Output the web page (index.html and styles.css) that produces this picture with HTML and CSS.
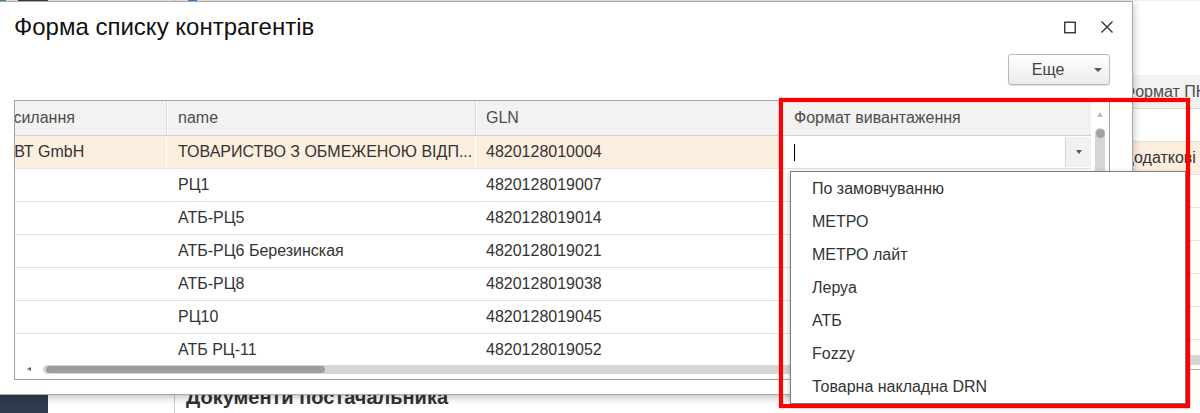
FILE: index.html
```html
<!DOCTYPE html>
<html lang="uk">
<head>
<meta charset="utf-8">
<title>Форма списку контрагентів</title>
<link rel="stylesheet" href="styles.css">
</head>
<body>
<div class="desktop">
  <div class="app">
    <div class="topstrip">
      <span class="ts-green"></span><span class="ts-gap"></span><span class="ts-dark"></span><span class="ts-nav"></span><span class="ts-line"></span><span class="ts-gap2"></span><span class="ts-blue"></span>
    </div>
    <div class="app-body">
      <aside class="sidebar"></aside>
      <nav class="navpanel"></nav>
      <main class="workspace">
        <div class="bg-table">
          <div class="bg-row bg-head"><div class="bg-fill"></div><div class="bg-last">Формат ПН</div></div>
          <div class="bg-rows">
            <div class="bg-row"><div class="bg-fill"></div><div class="bg-last"></div></div>
            <div class="bg-row bg-sel"><div class="bg-fill"></div><div class="bg-last">Додаткові угоди</div></div>
            <div class="bg-row"><div class="bg-fill"></div><div class="bg-last"></div></div>
            <div class="bg-row"><div class="bg-fill"></div><div class="bg-last"></div></div>
            <div class="bg-row"><div class="bg-fill"></div><div class="bg-last"></div></div>
            <div class="bg-row"><div class="bg-fill"></div><div class="bg-last"></div></div>
            <div class="bg-row"><div class="bg-fill"></div><div class="bg-last"></div></div>
            <div class="bg-row"><div class="bg-fill"></div><div class="bg-last"></div></div>
          </div>
          <div class="bg-hscroll"><div class="bg-hs-bar"></div></div>
        </div>
        <h2 class="bg-heading">Документи постачальника</h2>
      </main>
    </div>
  </div>

  <section class="dialog">
    <header class="dlg-head">
      <h1 class="dlg-title">Форма списку контрагентів</h1>
      <div class="win-btns">
        <span class="win-btn" title="Розгорнути">
          <svg width="14" height="14" viewBox="0 0 14 14"><rect x="1.75" y="2.25" width="10.5" height="10.5" fill="none" stroke="#333" stroke-width="1.4"/></svg>
        </span>
        <span class="win-btn" title="Закрити">
          <svg width="14" height="14" viewBox="0 0 14 14"><path d="M1.5 1.5 L12.5 12.5 M12.5 1.5 L1.5 12.5" fill="none" stroke="#333" stroke-width="1.4"/></svg>
        </span>
      </div>
    </header>
    <div class="dlg-toolbar">
      <div class="more-btn"><span class="more-label">Еще</span><span class="more-arrow"><span class="tri-down"></span></span></div>
    </div>
    <div class="grid">
      <div class="grid-main">
        <div class="grid-view">
          <div class="grid-inner">
            <div class="g-row g-head">
              <div class="g-cell c1">Посилання</div>
              <div class="g-cell c2">name</div>
              <div class="g-cell c3">GLN</div>
              <div class="g-cell c4">Формат вивантаження</div>
            </div>
            <div class="g-row g-sel">
              <div class="g-cell c1">АБВТ GmbH</div>
              <div class="g-cell c2">ТОВАРИСТВО З ОБМЕЖЕНОЮ ВІДП...</div>
              <div class="g-cell c3">4820128010004</div>
              <div class="g-cell c4 g-edit"><span class="caret"></span><span class="edit-btn"><span class="tri-down small"></span></span></div>
            </div>
            <div class="g-row">
              <div class="g-cell c1"></div>
              <div class="g-cell c2">РЦ1</div>
              <div class="g-cell c3">4820128019007</div>
              <div class="g-cell c4"></div>
            </div>
            <div class="g-row">
              <div class="g-cell c1"></div>
              <div class="g-cell c2">АТБ-РЦ5</div>
              <div class="g-cell c3">4820128019014</div>
              <div class="g-cell c4"></div>
            </div>
            <div class="g-row">
              <div class="g-cell c1"></div>
              <div class="g-cell c2">АТБ-РЦ6 Березинская</div>
              <div class="g-cell c3">4820128019021</div>
              <div class="g-cell c4"></div>
            </div>
            <div class="g-row">
              <div class="g-cell c1"></div>
              <div class="g-cell c2">АТБ-РЦ8</div>
              <div class="g-cell c3">4820128019038</div>
              <div class="g-cell c4"></div>
            </div>
            <div class="g-row">
              <div class="g-cell c1"></div>
              <div class="g-cell c2">РЦ10</div>
              <div class="g-cell c3">4820128019045</div>
              <div class="g-cell c4"></div>
            </div>
            <div class="g-row">
              <div class="g-cell c1"></div>
              <div class="g-cell c2">АТБ РЦ-11</div>
              <div class="g-cell c3">4820128019052</div>
              <div class="g-cell c4"></div>
            </div>
          </div>
        </div>
        <div class="hscroll">
          <span class="tri-left"></span>
          <div class="hs-track"><div class="hs-thumb"></div></div>
        </div>
      </div>
      <div class="vscroll">
        <span class="tri-up"></span>
        <div class="vs-track"><span class="vs-thumb"></span></div>
      </div>
    </div>
  </section>

  <ul class="dropdown">
    <li>По замовчуванню</li>
    <li>МЕТРО</li>
    <li>МЕТРО лайт</li>
    <li>Леруа</li>
    <li>АТБ</li>
    <li>Fozzy</li>
    <li>Товарна накладна DRN</li>
  </ul>

  <div class="highlight"></div>
</div>
</body>
</html>
```

FILE: styles.css
```css
* { box-sizing: border-box; }
html, body { margin: 0; padding: 0; }
body {
  width: 1200px;
  height: 413px;
  overflow: hidden;
  background: #fff;
  font-family: "Liberation Sans", Arial, sans-serif;
  color: #333;
}
.desktop { position: relative; width: 1200px; height: 413px; overflow: hidden; }

/* background application */
.app { display: flex; flex-direction: column; height: 100%; }
.topstrip { display: flex; height: 1px; background: #eeeeee; flex: none; }
.topstrip span { display: block; height: 1px; }
.ts-green { width: 6px; background: #3f9f57; }
.ts-gap { width: 12px; }
.ts-dark { width: 30px; background: #2f3c4e; }
.ts-nav { width: 126px; }
.ts-line { width: 1px; background: #bdbdbd; }
.ts-gap2 { width: 13px; }
.ts-blue { width: 9px; background: #1e88e5; }
.app-body { flex: 1; display: flex; min-height: 0; }
.sidebar { width: 48px; background: #2f3c4e; flex: none; }
.navpanel { width: 127px; border-right: 1px solid #cfcfcf; flex: none; }
.workspace { flex: 1; padding-top: 74px; display: flex; flex-direction: column; }
.bg-table { border-bottom: 1px solid #b3b3b3; }
.bg-row { display: flex; height: 33px; border-bottom: 1px solid #e2e2e2; font-size: 16px; line-height: 32px; }
.bg-head { height: 34px; background: #f2f2f2; color: #4d4d4d; border-bottom-color: #d8d8d8; line-height: 33px; }
.bg-rows { height: 246px; overflow: hidden; }
.bg-sel { background: #fdefdf; }
.bg-fill { flex: 1; }
.bg-last { width: 88px; padding-left: 11px; white-space: nowrap; overflow: hidden; }
.bg-hscroll { height: 14px; }
.bg-hs-bar { height: 10px; background: #d6d6d6; }
.bg-heading { margin: 15px 0 0; padding-left: 11px; font-size: 20px; font-weight: bold; line-height: 24px; color: #333; white-space: nowrap; }

/* dialog window */
.dialog {
  position: absolute;
  left: -1px;
  top: 1px;
  width: 1134px;
  height: 394px;
  background: #fff;
  border: 1px solid #a9a9a9;
  box-shadow: 0 2px 8px rgba(0, 0, 0, 0.28);
  display: flex;
  flex-direction: column;
}
.dlg-head { height: 50px; display: flex; align-items: center; padding: 0 18px 0 14px; flex: none; }
.dlg-title { flex: 1; margin: 0; font-size: 24px; font-weight: normal; color: #111; white-space: nowrap; }
.win-btns { display: flex; gap: 23px; }
.win-btn { display: block; width: 14px; height: 14px; }
.win-btn svg { display: block; }

.dlg-toolbar { height: 48px; flex: none; display: flex; justify-content: flex-end; align-items: flex-start; padding: 2px 22px 0 0; }
.more-btn {
  width: 102px;
  height: 31px;
  display: flex;
  align-items: center;
  border: 1px solid #b9b9b9;
  border-radius: 3px;
  background: linear-gradient(#ffffff, #ececec);
  box-shadow: 0 1px 1px rgba(0, 0, 0, 0.12);
  font-size: 16px;
  color: #444;
}
.more-label { flex: 1; text-align: center; }
.more-arrow { width: 22px; display: flex; justify-content: center; }
.tri-down { display: block; width: 0; height: 0; border-left: 4px solid transparent; border-right: 4px solid transparent; border-top: 4px solid #555; }
.tri-down.small { border-left-width: 3.5px; border-right-width: 3.5px; border-top-width: 4px; }

/* grid */
.grid {
  flex: none;
  height: 280px;
  margin: 0 22px 0 14px;
  border: 1px solid #a3a3a3;
  display: flex;
}
.grid-main { flex: 1; display: flex; flex-direction: column; min-width: 0; }
.grid-view { flex: 1; overflow: hidden; min-height: 0; }
.grid-inner { margin-left: -33px; width: max-content; }
.g-row { display: flex; height: 33px; border-bottom: 1px solid #e2e2e2; font-size: 16px; line-height: 32px; }
.g-cell { padding-left: 11px; white-space: nowrap; overflow: hidden; color: #333; }
.c1 { width: 185px; }
.c2 { width: 309px; }
.c3 { width: 307px; padding-left: 10px; }
.c4 { width: 308px; }
.g-head { height: 35px; background: #f2f2f2; border-bottom-color: #d2d2d2; line-height: 34px; }
.g-head .g-cell { color: #4d4d4d; border-right: 1px solid #dadada; box-shadow: inset 1px 0 #fff; }
.g-head .c4 { border-right: none; }
.g-sel .c1, .g-sel .c2, .g-sel .c3 { background: #fdefdf; border-right: 1px solid #fff; }
.g-edit { position: relative; display: flex; align-items: center; justify-content: space-between; padding-right: 0; }
.caret { display: block; width: 1px; height: 17px; background: #000; }
.edit-btn { display: flex; align-items: center; justify-content: center; width: 26px; height: 30px; background: #f1f1f1; border-left: 1px solid #d4d4d4; }

.hscroll { height: 17px; flex: none; display: flex; align-items: flex-start; padding: 3px 4px 0 12px; }
.tri-left { display: block; width: 0; height: 0; margin-top: 2px; border-top: 2.5px solid transparent; border-bottom: 2.5px solid transparent; border-right: 4px solid #666; }
.hs-track { flex: 1; margin-left: 12px; height: 9px; border-radius: 5px; background: #d6d6d6; padding: 1px 3px; }
.hs-thumb { width: 279px; height: 7px; border-radius: 4px; background: #9c9c9c; }

.vscroll { width: 18px; flex: none; display: flex; flex-direction: column; align-items: center; padding-top: 11px; }
.tri-up { display: block; width: 0; height: 0; border-left: 3px solid transparent; border-right: 3px solid transparent; border-bottom: 5px solid #bdbdbd; }
.vs-track { margin-top: 11px; width: 10px; height: 230px; border-radius: 5px; background: #d6d6d6; padding-top: 1px; display: flex; justify-content: center; }
.vs-thumb { display: block; width: 9px; height: 9px; border-radius: 50%; background: #a2a2a2; }

/* dropdown list */
.dropdown {
  position: absolute;
  left: 790px;
  top: 171px;
  width: 396px;
  height: 233px;
  margin: 0;
  padding: 0;
  list-style: none;
  background: #fff;
  border: 1px solid #7f7f7f;
  box-shadow: 0 2px 6px rgba(0, 0, 0, 0.25);
}
.dropdown li { height: 33px; line-height: 33px; padding-left: 21px; font-size: 16px; color: #333; white-space: nowrap; }

/* annotation */
.highlight {
  position: absolute;
  left: 779px;
  top: 98px;
  width: 411px;
  height: 310px;
  border: 4px solid #ff0000;
  box-shadow: 0 0 1px rgba(255, 0, 0, 0.8), inset 0 0 1px rgba(255, 0, 0, 0.8);
  pointer-events: none;
}
```
